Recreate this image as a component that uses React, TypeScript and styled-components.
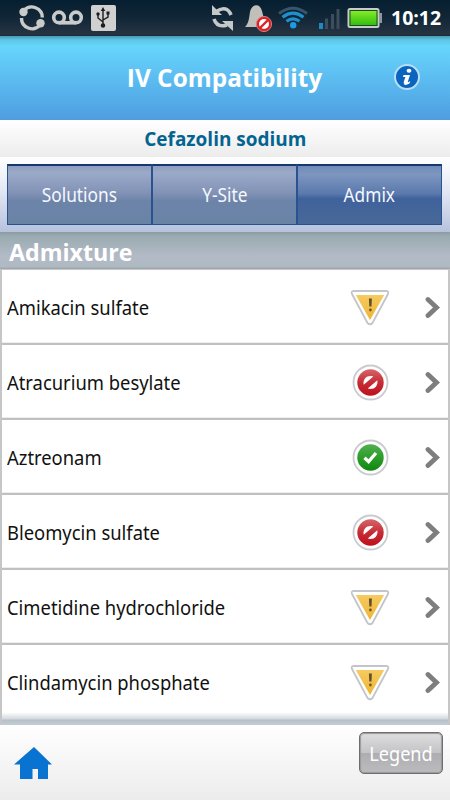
import React from "react";
import styled, { createGlobalStyle } from "styled-components";

type Status = "caution" | "blocked" | "ok";

const Global = createGlobalStyle`
  * { box-sizing: border-box; }
  body { margin: 0; background: #fff; font-family: "Open Sans", "Noto Sans", sans-serif; }
`;

const Screen = styled.div`
  width: 450px;
  height: 800px;
  display: flex;
  flex-direction: column;
  overflow: hidden;
`;

const Condensed = styled.span<{ $x: number; $left?: boolean }>`
  display: inline-block;
  white-space: nowrap;
  transform: scaleX(${(p) => p.$x});
  transform-origin: ${(p) => (p.$left ? "left" : "center")};
`;

const StatusBar = styled.div`
  height: 36px;
  flex: none;
  display: flex;
  align-items: center;
  background: linear-gradient(#051e30, #132839 55%, #263342 94%, #1b2b38);
  svg { display: block; }
`;

const Clock = styled.span`
  margin-left: 8px;
  color: #fff;
  font: 700 19.5px/36px "Open Sans", sans-serif;
  white-space: nowrap;
`;

const Header = styled.header`
  height: 84px;
  flex: none;
  display: grid;
  grid-template-columns: 90px 1fr 90px;
  align-items: center;
  justify-items: center;
  background: linear-gradient(#4a9ab2 0, #5cc6e6 4px, #66d6fb 10px, #5fc3f4 40%, #4e9de0 100%);
`;

const HeaderTitle = styled.h1`
  grid-column: 2;
  margin: 0 0 0 -1px;
  color: #fff;
  font: 700 24.4px/34px "Open Sans", sans-serif;
  white-space: nowrap;
`;

const InfoButton = styled.div`
  margin-left: 4px;
  margin-top: -3px;
  height: 28px;
`;

const DrugBar = styled.div`
  height: 37px;
  flex: none;
  display: flex;
  align-items: center;
  justify-content: center;
  background: linear-gradient(#fff, #ececec);
  color: #046491;
  font: 700 19.5px/37px "Open Sans", sans-serif;
  padding-left: 1px;
`;

const TabBar = styled.nav`
  height: 75px;
  flex: none;
  padding: 7px 8px 7px 7px;
  display: flex;
  background: linear-gradient(#fff, #e3e7f4 45%, #b6c2dc);
`;

const Tab = styled.div<{ $active?: boolean }>`
  flex: 1;
  height: 61px;
  display: flex;
  align-items: center;
  justify-content: center;
  color: #f6f8fd;
  font: 400 19px/60px "Noto Sans", sans-serif;
  border: solid #2b5290;
  border-width: 2px 1px 1px 1px;
  border-top-color: #14376d;
  background: ${(p) =>
    p.$active
      ? "linear-gradient(#6d8bb9, #7e96bf 14%, #5a79ad 48%, #40629b 56%, #486898)"
      : "linear-gradient(#8e9dbd, #9caac9 12%, #8091b5 48%, #6c84a9 60%, #6983a5)"};
`;

const Section = styled.h2`
  height: 37px;
  flex: none;
  margin: 0;
  padding-left: 9px;
  color: #fff;
  font: 700 24px/39px "Open Sans", sans-serif;
  background: linear-gradient(#8d9ca4, #9aabb1 12%, #b3bac6 65%, #afbac3 94%, #98a2a7);
`;

const List = styled.div`
  height: 456px;
  flex: none;
  border: solid #c6c6c6;
  border-width: 1px 2px 0 2px;
  background: #fff;
`;

const Row = styled.div`
  height: 75px;
  display: flex;
  align-items: center;
  padding: 2px 7px 0 5px;
  border-bottom: 2px solid #c0c0c0;
  box-shadow: inset 0 -1px #ededed;
  &:last-of-type {
    height: 80px;
    padding-bottom: 7px;
    border-bottom: 0;
    box-shadow: none;
    background: linear-gradient(#fff 67px, #d3d9de 74px, #b5bfc5 75px, #bac6cd 77px, #c4ced4 80px);
  }
`;

const DrugName = styled.span`
  flex: 1;
  color: #111;
  font: 400 19.3px/28px "Noto Sans", sans-serif;
`;

const StatusCell = styled.div`
  width: 40px;
  height: 40px;
  margin-right: 35px;
`;

const Footer = styled.footer`
  height: 75px;
  flex: none;
  display: flex;
  justify-content: space-between;
  padding: 7px 7px 0 14px;
  background: linear-gradient(#fff, #ececec);
`;

const HomeIcon = styled.svg`
  display: block;
  margin-top: 15px;
`;

const LegendButton = styled.div`
  width: 84px;
  height: 42px;
  border: 1px solid #6e6e70;
  border-radius: 5px;
  box-shadow: inset 0 0 1px 1px #99999c;
  background: linear-gradient(#dededf, #c4c4c7 49%, #aeaeb2 51%, #bcbcbf);
  color: #fff;
  font: 400 20px/42px "Noto Sans", sans-serif;
  text-align: center;
`;

const SystemIcons = () => (
  <svg width="383" height="36" viewBox="0 0 383 36" fill="none">
    <g stroke="#c9cbcb" strokeWidth="3.4">
      <path d="M24 10.500A10.500 10.500 0 0 1 42.300 17.500" />
      <path d="M21.500 18A10.500 10.500 0 0 0 40 25" />
    </g>
    <g fill="#c9cbcb"><circle cx="23.500" cy="12" r="4.200" /><circle cx="40.500" cy="23.200" r="4.200" /></g>
    <g stroke="#c9cbcb" strokeWidth="3.6"><circle cx="59" cy="17.4" r="5.300" /><circle cx="76" cy="17.4" r="5.300" /><path d="M59 22.800H76" /></g>
    <rect x="91" y="5" width="25" height="26" rx="2" fill="#d0d0d0" />
    <path d="M103 25V9M103 22L98 18V14M103 20L108 17V13" stroke="#1a1c1e" strokeWidth="1.4" />
    <path d="M103 7L105.200 11H100.800ZM106.500 11.500H109.500V14.500H106.500Z" fill="#1a1c1e" />
    <circle cx="103" cy="25.500" r="2.200" fill="#1a1c1e" /><circle cx="98" cy="14" r="1.700" fill="#1a1c1e" />

    <path d="M217 11Q227 5 231 15M214 19Q217 28 227 25" stroke="#c5c8c9" strokeWidth="3.6" />
    <path d="M212 5V15H222ZM222 21H233V31Z" fill="#c5c8c9" />
    <path d="M245 27C249 23 249 18 250 12Q251 7 254.500 5.500Q260 4 262 11L264 19L268 27Z" fill="#c1bfb9" />
    <circle cx="264" cy="24" r="7.600" fill="#df2028" stroke="#d97a7a" strokeWidth="1" />
    <circle cx="264" cy="24" r="5" fill="#fff" /><path d="M260 28L268 20" stroke="#df2028" strokeWidth="2.400" />

    <path d="M279 13.500Q293 3 307 13.500" stroke="#36566b" strokeWidth="3" />
    <g stroke="#1e8fcf" strokeWidth="3.200"><path d="M282.500 17.200Q293 9 303.500 17.200" /><path d="M286.500 21.200Q293 16.500 299.500 21.200" /></g>
    <circle cx="293.200" cy="25.300" r="3.200" fill="#1e9be0" />
    <rect x="319" y="23" width="4" height="6" fill="#1c8ac7" />
    <g fill="#3c4d5b"><rect x="325" y="18.500" width="3" height="10.500" /><rect x="331" y="14" width="3" height="15" /><rect x="336.500" y="9" width="3" height="20" /></g>
    <defs><linearGradient id="charge" x2="0" y2="1"><stop stopColor="#8ff22d" /><stop offset="1" stopColor="#27b80b" /></linearGradient></defs>
    <rect x="348.500" y="9" width="30" height="18" rx="1.500" fill="url(#charge)" stroke="#c9cccc" strokeWidth="2" />
    <rect x="350" y="10.500" width="27" height="15" stroke="#1c4a20" strokeWidth="1" />
    <path d="M379 13H382V23H379Z" fill="#8f979c" />
  </svg>
);

const StatusIcon = ({ status }: { status: Status }) => (
  <svg width="40" height="40" viewBox="0 0 40 40" fill="none">
    <defs>
      <linearGradient id="amber" x2="0" y2="1"><stop stopColor="#f6cb61" /><stop offset="1" stopColor="#efb432" /></linearGradient>
      <linearGradient id="red" x2="0" y2="1"><stop stopColor="#d66469" /><stop offset=".5" stopColor="#c72c35" /><stop offset="1" stopColor="#bd101c" /></linearGradient>
      <linearGradient id="green" x2="0" y2="1"><stop stopColor="#53ae50" /><stop offset=".5" stopColor="#2c9d2b" /><stop offset="1" stopColor="#10870f" /></linearGradient>
    </defs>
    {status === "caution" ? (
      <>
        <path d="M3 3H37Q39 3.500 38 6L22.500 35Q20 37.500 17.500 35L2 6Q1 3.500 3 3Z" fill="#fff" stroke="#c2c5c9" strokeWidth="1.800" />
        <path d="M5.800 7H34.200L20 32Z" fill="url(#amber)" />
        <path d="M18.900 10.500H21.900L21.500 18.500H19.300Z" fill="#60502a" /><circle cx="20.400" cy="22" r="1.400" fill="#6f592b" />
      </>
    ) : (
      <>
        <circle cx="20.500" cy="19.500" r="17" fill="#fff" stroke="#c9cbcf" strokeWidth="1.800" />
        <circle cx="20.500" cy="19.500" r="13.200" fill={status === "ok" ? "url(#green)" : "url(#red)"} />
        {status === "ok" ? (
          <path d="M14.500 19.800L18.600 23.600L26 15" stroke="#fff" strokeWidth="3.300" />
        ) : (
          <path d="M13.700 21.800C12.500 15.500 17.500 11.800 23.300 13.400ZM27.300 17.200C28.500 23.500 23.500 27.200 17.700 25.600Z" fill="#fff" />
        )}
      </>
    )}
  </svg>
);

const Chevron = () => (
  <svg width="16" height="24" viewBox="0 0 16 24" fill="none">
    <path d="M3 3.500L11.500 11.500L3 19.500" stroke="#7e7e7e" strokeWidth="4.800" strokeLinecap="round" />
  </svg>
);

const drugs: { name: string; status: Status }[] = [
  { name: "Amikacin sulfate", status: "caution" },
  { name: "Atracurium besylate", status: "blocked" },
  { name: "Aztreonam", status: "ok" },
  { name: "Bleomycin sulfate", status: "blocked" },
  { name: "Cimetidine hydrochloride", status: "caution" },
  { name: "Clindamycin phosphate", status: "caution" },
];

export default function App() {
  return (
    <Screen>
      <Global />
      <StatusBar>
        <SystemIcons />
        <Clock>10:12</Clock>
      </StatusBar>
      <Header>
        <HeaderTitle>IV Compatibility</HeaderTitle>
        <InfoButton>
          <svg width="28" height="28" viewBox="0 0 28 28">
            <circle cx="14" cy="14" r="12" fill="#0b64bd" stroke="#b5e0f5" strokeWidth="2" />
            <ellipse cx="16" cy="7.800" rx="2.400" ry="2" fill="#fff" />
            <path d="M10.500 12H17L14.700 19Q15.500 19.500 17.300 18L16.500 20.500Q10.500 24 10.700 19L12.400 14H10Z" fill="#fff" />
          </svg>
        </InfoButton>
      </Header>
      <DrugBar><Condensed $x={0.973}>Cefazolin sodium</Condensed></DrugBar>
      <TabBar>
        <Tab><Condensed $x={0.91}>Solutions</Condensed></Tab>
        <Tab><Condensed $x={0.91}>Y-Site</Condensed></Tab>
        <Tab $active><Condensed $x={0.91}>Admix</Condensed></Tab>
      </TabBar>
      <Section><Condensed $x={0.967} $left>Admixture</Condensed></Section>
      <List>
        {drugs.map((d) => (
          <Row key={d.name}>
            <DrugName><Condensed $x={0.953} $left>{d.name}</Condensed></DrugName>
            <StatusCell><StatusIcon status={d.status} /></StatusCell>
            <Chevron />
          </Row>
        ))}
      </List>
      <Footer>
        <HomeIcon width="38" height="34" viewBox="0 0 38 34">
          <path d="M20 0L38 17.500H34V32H24V22H18.500V32H6V17.500H0Z" fill="#0873d0" />
        </HomeIcon>
        <LegendButton><Condensed $x={0.905}>Legend</Condensed></LegendButton>
      </Footer>
    </Screen>
  );
}
